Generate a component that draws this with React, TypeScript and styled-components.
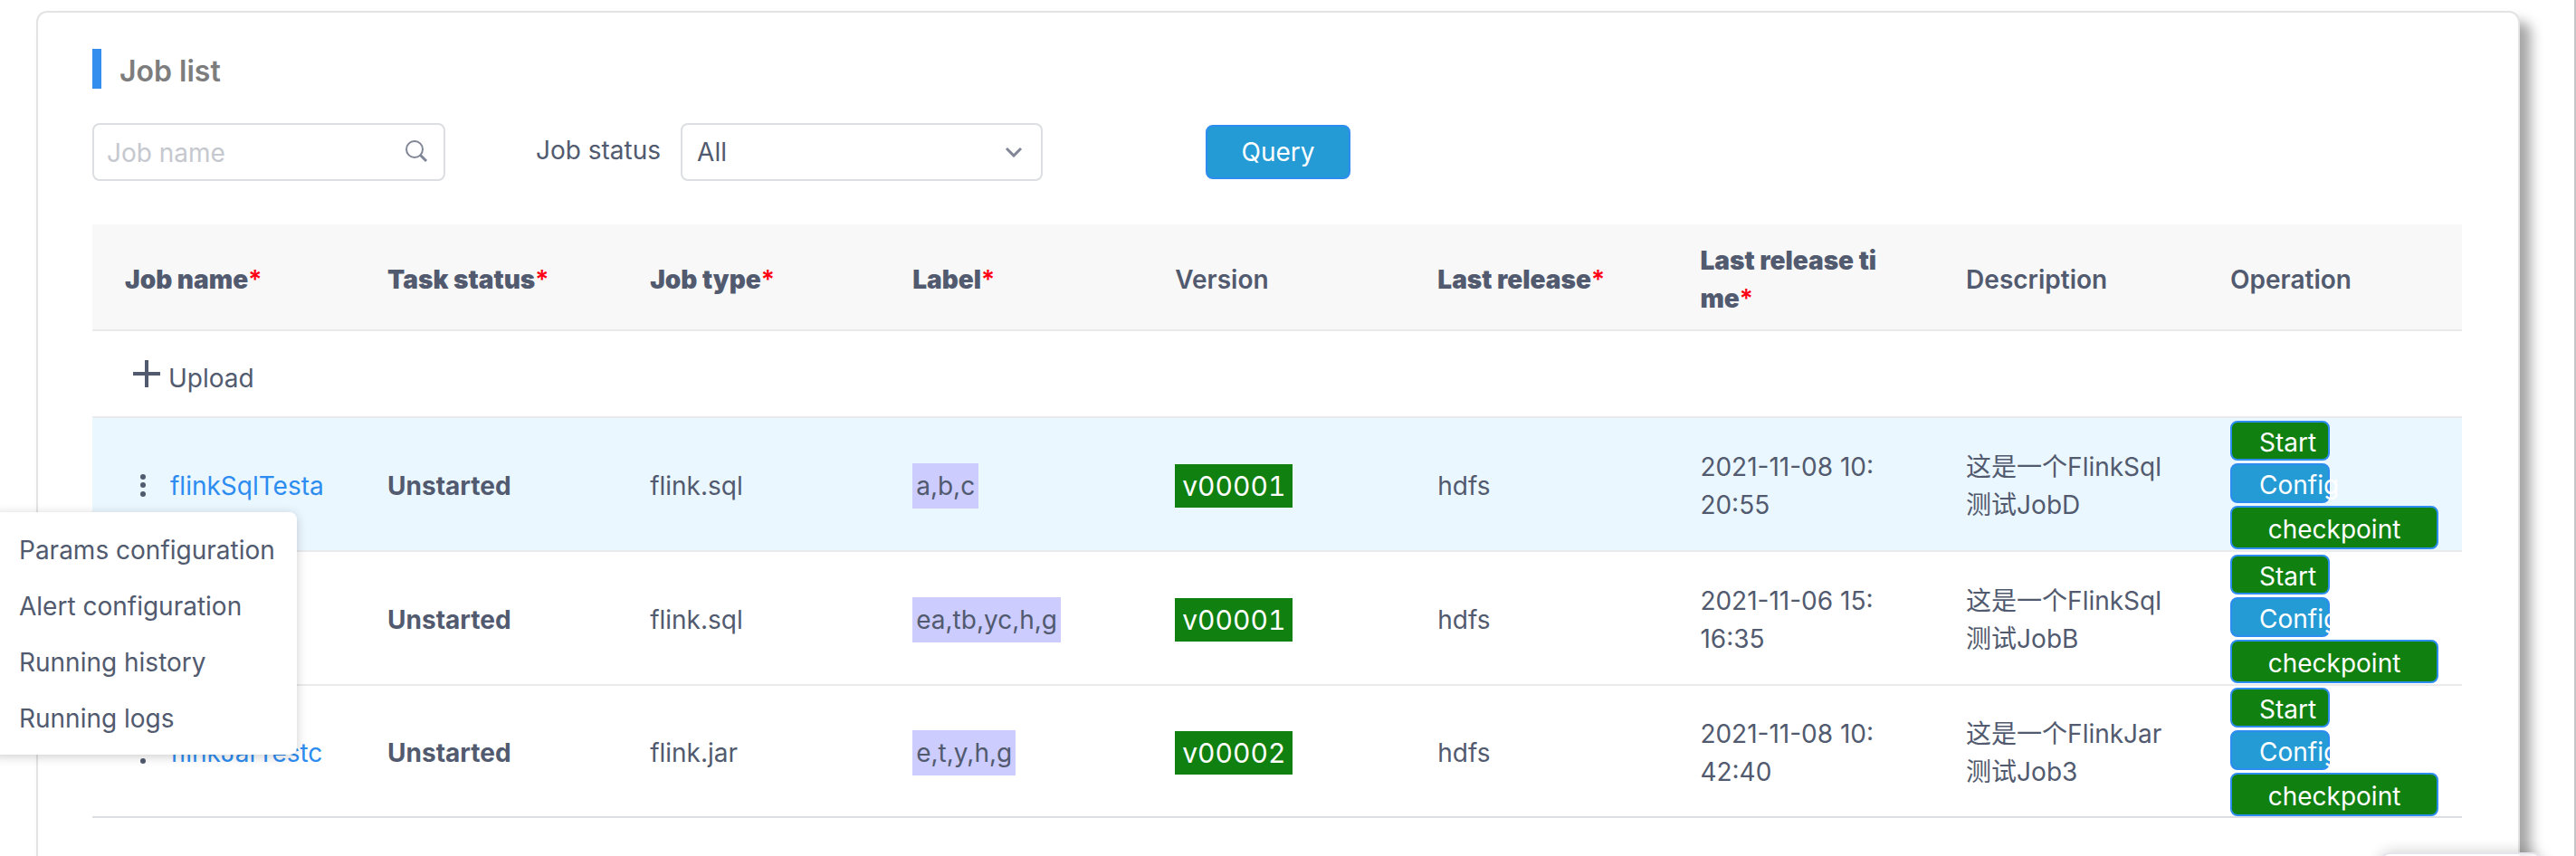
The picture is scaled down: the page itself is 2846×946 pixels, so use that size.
import React from "react";
import styled, { createGlobalStyle, css } from "styled-components";

const GlobalStyle = createGlobalStyle`
  *, *::before, *::after { box-sizing: border-box; }
  body {
    margin: 0;
    background: #fff;
    color: #515a6e;
    font-family: Inter, "Noto Sans CJK SC", sans-serif;
    font-size: 28px;
    line-height: 42px;
  }
  button, input, select { font: inherit; color: inherit; }
`;

const Page = styled.main`
  position: relative;
  height: 100vh;
  overflow: hidden;
  padding: 12px 60px 0 40px;
  border-right: 2px solid #c5c5c8;
`;

const Card = styled.section`
  padding: 40px 62px 80px 60px;
  border: 2px solid #e3e3e3;
  border-radius: 12px;
  background: #fff;
  box-shadow: 12px 12px 14px #a6a6a6;
`;

const Title = styled.h1`
  margin: 0 0 38px;
  padding: 6px 0 0 20px;
  border-left: 10px solid #348eed;
  color: #7d7d7d;
  font-size: 32px;
  font-weight: 600;
  line-height: 38px;
`;

const Toolbar = styled.form`
  display: flex;
  align-items: center;
  margin-bottom: 48px;
`;

const fieldBox = css`
  height: 64px;
  border: 2px solid #dcdee2;
  border-radius: 8px;
  background: #fff;
`;

const SearchBox = styled.div`
  ${fieldBox}
  display: flex;
  align-items: center;
  width: 390px;
  padding: 0 16px 0 14px;
  svg { flex: none; }
`;

const SearchInput = styled.input`
  flex: 1;
  min-width: 0;
  padding: 2px 0 0;
  border: 0;
  outline: 0;
  background: none;
  &::placeholder { color: #c5c8ce; opacity: 1; }
`;

const StatusLabel = styled.label`
  margin: 0 22px 4px 100px;
`;

const SelectBox = styled.div`
  ${fieldBox}
  display: grid;
  align-items: center;
  width: 400px;
  svg {
    grid-area: 1 / 1;
    justify-self: end;
    margin-right: 20px;
    pointer-events: none;
  }
`;

const Select = styled.select`
  grid-area: 1 / 1;
  width: 100%;
  height: 60px;
  padding: 0 16px;
  border: 0;
  outline: 0;
  appearance: none;
  background: none;
`;

const QueryButton = styled.button`
  width: 160px;
  height: 60px;
  margin-left: 180px;
  padding: 0;
  border: 2px solid #2d8cf0;
  border-radius: 8px;
  background: #259bd6;
  color: #fff;
`;

const Table = styled.table`
  width: 100%;
  table-layout: fixed;
  border-collapse: separate;
  border-spacing: 0;
  border-bottom: 2px solid #dcdee2;
`;

const Col = styled.col<{ $share: string }>`
  width: ${(p) => p.$share};
`;

const HeadCell = styled.th<{ $strong: boolean }>`
  height: 118px;
  padding: 6px 36px 0;
  border-bottom: 2px solid #e8eaec;
  background: #f8f8f9;
  font-weight: ${(p) => (p.$strong ? 900 : 600)};
  text-align: left;
  white-space: pre-line;
`;

const Required = styled.span`
  color: #ff0014;
  font-weight: 600;
`;

const Cell = styled.td<{ $strong?: boolean }>`
  padding: 4px 36px 0;
  border-bottom: 2px solid #e8eaec;
  font-weight: ${(p) => (p.$strong ? 700 : 400)};
  word-break: break-all;
`;

const TimeCell = styled(Cell)`
  white-space: pre;
`;

const UploadRow = styled.tr`
  height: 96px;
`;

const JobRow = styled.tr<{ $active: boolean }>`
  height: 148px;
  background: ${(p) => (p.$active ? "#ebf7ff" : "#fff")};
  &:last-child { height: 144px; }
  &:last-child > td { border-bottom: 0; }
`;

const UploadButton = styled.button`
  display: flex;
  align-items: center;
  gap: 8px;
  padding: 6px 0 0 8px;
  border: 0;
  background: none;
  svg { margin-bottom: 10px; }
`;

const NameBox = styled.div`
  position: relative;
  display: flex;
  align-items: center;
  gap: 24px;
  padding-left: 14px;
`;

const MoreButton = styled.button`
  display: flex;
  padding: 0;
  border: 0;
  background: none;
`;

const JobLink = styled.a`
  color: #2d8cf0;
  text-decoration: none;
  white-space: nowrap;
`;

const Menu = styled.ul`
  position: absolute;
  z-index: 2;
  top: 50px;
  left: -148px;
  width: 338px;
  margin: 0;
  padding: 10px 0;
  border-radius: 8px;
  background: #fff;
  box-shadow: 0 2px 12px rgba(0, 0, 0, 0.2);
  list-style: none;
`;

const MenuButton = styled.button`
  display: block;
  width: 100%;
  height: 62px;
  padding: 2px 0 0 31px;
  border: 0;
  background: none;
  text-align: left;
  white-space: nowrap;
`;

const LabelTag = styled.span`
  display: inline-block;
  padding: 4px;
  background: #ccccff;
`;

const VersionTag = styled.span`
  display: inline-block;
  padding: 0 8px;
  background: #108010;
  color: #fff;
  font-size: 30px;
  font-variant-numeric: tabular-nums;
  line-height: 48px;
`;

const OperationCell = styled(Cell)`
  padding: 2px 0 0 36px;
`;

const Operations = styled.div`
  display: flex;
  flex-direction: column;
  align-items: flex-start;
  gap: 3px;
`;

const ActionButton = styled.button<{ $tone: "green" | "blue"; $wide?: boolean }>`
  width: ${(p) => (p.$wide ? 230 : 110)}px;
  height: ${(p) => (p.$wide ? 48 : 44)}px;
  padding: 4px 30px 0;
  border: 2px solid #2d8cf0;
  border-radius: 8px;
  background: ${(p) => (p.$tone === "green" ? "#108010" : "#259bd6")};
  color: #fff;
  line-height: 36px;
  white-space: nowrap;
`;

const CornerPanel = styled.aside`
  position: absolute;
  right: 36px;
  bottom: -56px;
  width: 178px;
  height: 60px;
  border: 2px solid #e4e4ea;
  border-radius: 10px;
  background: rgba(255, 255, 255, 0.8);
  box-shadow: 0 0 16px rgba(0, 0, 0, 0.2);
`;

const SearchIcon = () => (
  <svg width="26" height="26" viewBox="0 0 26 26" fill="none" stroke="#808695" strokeWidth="2" aria-hidden="true">
    <circle cx="10" cy="10" r="9" />
    <path d="M16 16l7 7" strokeWidth="3" />
  </svg>
);

const ChevronIcon = () => (
  <svg width="20" height="12" viewBox="0 0 20 12" fill="none" stroke="#808695" strokeWidth="3" aria-hidden="true">
    <path d="M2 2l8 8 8-8" />
  </svg>
);

const PlusIcon = () => (
  <svg width="32" height="32" viewBox="0 0 32 32" stroke="#515a6e" strokeWidth="4" aria-hidden="true">
    <path d="M16 1v30M1 16h30" />
  </svg>
);

const MoreIcon = () => (
  <svg width="12" height="28" viewBox="0 0 12 28" fill="#515a6e" aria-hidden="true">
    <circle cx="6" cy="4" r="3" />
    <circle cx="6" cy="13" r="3" />
    <circle cx="6" cy="23" r="3" />
  </svg>
);

const columns = [
  { title: "Job name", required: true, share: "11.08%" },
  { title: "Task status", required: true, share: "11.08%" },
  { title: "Job type", required: true, share: "11.08%" },
  { title: "Label", required: true, share: "11.08%" },
  { title: "Version", required: false, share: "11.08%" },
  { title: "Last release", required: true, share: "11.08%" },
  { title: "Last release ti\nme", required: true, share: "11.22%" },
  { title: "Description", required: false, share: "11.15%" },
  { title: "Operation", required: false, share: "11.15%" },
];

const jobs = [
  { name: "flinkSqlTesta", type: "flink.sql", label: "a,b,c", version: "v00001", time: "2021-11-08 10:\n20:55", description: "这是一个FlinkSql测试JobD" },
  { name: "flinkSql", type: "flink.sql", label: "ea,tb,yc,h,g", version: "v00001", time: "2021-11-06 15:\n16:35", description: "这是一个FlinkSql测试JobB" },
  { name: "flinkJarTestc", type: "flink.jar", label: "e,t,y,h,g", version: "v00002", time: "2021-11-08 10:\n42:40", description: "这是一个FlinkJar测试Job3" },
];

const menuItems = ["Params configuration", "Alert configuration", "Running history", "Running logs"];

export default function App() {
  return (
    <Page>
      <GlobalStyle />
      <Card>
        <Title>Job list</Title>
        <Toolbar onSubmit={(e) => e.preventDefault()}>
          <SearchBox>
            <SearchInput placeholder="Job name" aria-label="Job name" />
            <SearchIcon />
          </SearchBox>
          <StatusLabel htmlFor="status">Job status</StatusLabel>
          <SelectBox>
            <Select id="status">
              <option>All</option>
            </Select>
            <ChevronIcon />
          </SelectBox>
          <QueryButton type="submit">Query</QueryButton>
        </Toolbar>
        <Table>
          <colgroup>
            {columns.map((c) => (
              <Col key={c.title} $share={c.share} />
            ))}
          </colgroup>
          <thead>
            <tr>
              {columns.map((c) => (
                <HeadCell key={c.title} $strong={c.required} scope="col">
                  {c.title}
                  {c.required && <Required>*</Required>}
                </HeadCell>
              ))}
            </tr>
          </thead>
          <tbody>
            <UploadRow>
              <Cell colSpan={9}>
                <UploadButton type="button">
                  <PlusIcon />
                  Upload
                </UploadButton>
              </Cell>
            </UploadRow>
            {jobs.map((job, i) => (
              <JobRow key={job.name} $active={i === 0}>
                <Cell>
                  <NameBox>
                    <MoreButton type="button" aria-label="More actions">
                      <MoreIcon />
                    </MoreButton>
                    <JobLink href="#">{job.name}</JobLink>
                    {i === 0 && (
                      <Menu>
                        {menuItems.map((item) => (
                          <li key={item}>
                            <MenuButton type="button">{item}</MenuButton>
                          </li>
                        ))}
                      </Menu>
                    )}
                  </NameBox>
                </Cell>
                <Cell $strong>Unstarted</Cell>
                <Cell>{job.type}</Cell>
                <Cell>
                  <LabelTag>{job.label}</LabelTag>
                </Cell>
                <Cell>
                  <VersionTag>{job.version}</VersionTag>
                </Cell>
                <Cell>hdfs</Cell>
                <TimeCell>{job.time}</TimeCell>
                <Cell>{job.description}</Cell>
                <OperationCell>
                  <Operations>
                    <ActionButton type="button" $tone="green">Start</ActionButton>
                    <ActionButton type="button" $tone="blue">Config</ActionButton>
                    <ActionButton type="button" $tone="green" $wide>checkpoint</ActionButton>
                  </Operations>
                </OperationCell>
              </JobRow>
            ))}
          </tbody>
        </Table>
      </Card>
      <CornerPanel />
    </Page>
  );
}
